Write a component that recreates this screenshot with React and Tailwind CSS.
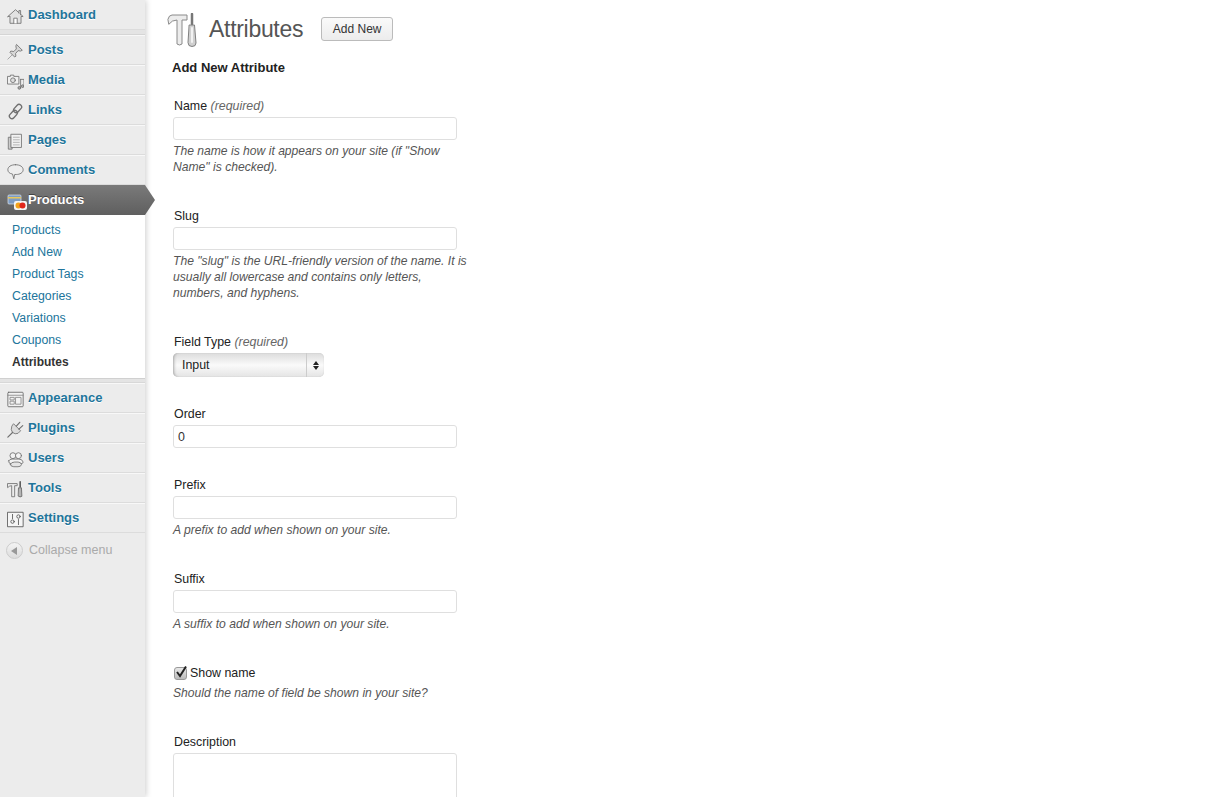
import { useState } from 'react'

const font = { fontFamily: '"Liberation Sans", Arial, sans-serif' }

function Icon({ children }) {
  return (
    <svg viewBox="0 0 20 20" className="mt-[3px] h-[17px] w-[17px]" fill="#e2e2e2" stroke="#707070" strokeWidth="1" strokeLinejoin="round" strokeLinecap="round">
      {children}
    </svg>
  )
}

const icons = {
  home: (
    <Icon>
      <path d="M1 10 L10 2 L19 10 L16.5 10 L16.5 18 L3.5 18 L3.5 10 Z" />
      <path d="M8 18 V12 H12 V18" fill="#fff" />
      <path d="M14 6 V3 H16 V8" />
    </Icon>
  ),
  pin: (
    <Icon>
      <path d="M11.5 2 L18 8.5 L16 9.5 L13 9 L10 12.5 L10.5 15.5 L9 16.5 L3.5 11 L4.5 9.5 L8 10 L11 7 L10.5 4 Z" fill="#d8d8d8" />
      <path d="M6 14 L1 19" fill="none" stroke="#999" />
    </Icon>
  ),
  media: (
    <Icon>
      <path d="M1 4 H4 V2.5 H8 V4 H14 V13 H1 Z" fill="#f0f0f0" />
      <circle cx="7" cy="8.5" r="2.8" fill="#ddd" />
      <path d="M16 7.5 H20 V15 M16 7.5 V17" fill="none" />
      <circle cx="14.5" cy="17.5" r="1.6" fill="#aaa" />
      <circle cx="18.5" cy="15.5" r="1.6" fill="#aaa" />
    </Icon>
  ),
  link: (
    <Icon>
      <rect x="9.5" y="1" width="6" height="11" rx="3" transform="rotate(42 12.5 6.5)" fill="none" strokeWidth="1.6" />
      <rect x="4.5" y="8" width="6" height="11" rx="3" transform="rotate(42 7.5 13.5)" fill="none" strokeWidth="1.6" />
    </Icon>
  ),
  pages: (
    <Icon>
      <path d="M2 5 H6 V19 H2 Z" fill="#ccc" />
      <path d="M5 1.5 H17 V17 H5 Z" fill="#f2f2f2" />
      <path d="M7.5 5 H14.5 M7.5 8 H14.5 M7.5 11 H14.5 M7.5 14 H14.5" fill="none" stroke="#aaa" />
    </Icon>
  ),
  comments: (
    <Icon>
      <path d="M10 2 C15.5 2 19 4.5 19 8 C19 11.5 15 13.5 11 13.5 L9 13.5 L8 18.5 L6.5 13 C3 12.5 1 10.5 1 8 C1 4.5 4.5 2 10 2 Z" fill="#eee" />
    </Icon>
  ),
  appearance: (
    <Icon>
      <rect x="1" y="1.5" width="18" height="17" rx="1" fill="#f3f3f3" stroke="#666" />
      <path d="M1 5 H19" stroke="#888" />
      <rect x="4" y="7.5" width="4.5" height="3" fill="none" stroke="#888" />
      <rect x="4" y="12" width="4.5" height="3.5" fill="none" stroke="#888" />
      <rect x="10.5" y="7.5" width="6" height="8" fill="none" stroke="#888" />
    </Icon>
  ),
  plugins: (
    <Icon>
      <path d="M8 3.5 L16 11.5 L13 14.5 Q9.5 16 6.5 13.5 Q4 10.5 5.5 6.5 Z" fill="#dcdcdc" />
      <path d="M11 6 L15 1.5 M14 9.5 L18.5 5.5 M6.5 13.5 L1 19" fill="none" strokeWidth="1.4" />
    </Icon>
  ),
  users: (
    <Icon>
      <circle cx="7" cy="5.5" r="3.5" fill="#f2f2f2" />
      <circle cx="13.5" cy="5.5" r="3.5" fill="#f2f2f2" />
      <path d="M2 11.5 Q3 9.5 6 9.5 L14 9.5 Q18 9.5 19 13 Q19 15 16 15 L5 15 Q1.5 15 2 11.5 Z" fill="#f2f2f2" />
      <path d="M4 15.5 Q5 13 9 13 L13 13 Q16.5 13 17 16 Q16.5 18.5 13 18.5 L8 18.5 Q4 18.5 4 15.5 Z" fill="#e4e4e4" />
    </Icon>
  ),
  tools: (
    <Icon>
      <path d="M1 3 H12 V5.5 H9 V18.5 H5.5 V5.5 Q3 5.5 1 7.5 Z" fill="#ececec" />
      <path d="M15.5 1 V7" fill="none" strokeWidth="1.8" stroke="#555" />
      <path d="M14 8 H17 L17.5 18 Q15.5 19.5 13.5 18 Z" fill="#b5b5b5" stroke="#666" />
    </Icon>
  ),
  settings: (
    <Icon>
      <rect x="1" y="1.5" width="18" height="17" fill="#f5f5f5" stroke="#555" />
      <path d="M6.5 4 V9 M13.5 10 V16" fill="none" stroke="#555" />
      <circle cx="6.5" cy="12.5" r="2" fill="none" stroke="#555" />
      <circle cx="13.5" cy="6.5" r="2" fill="none" stroke="#555" />
    </Icon>
  ),
  products: (
    <svg viewBox="0 0 20 20" className="mt-[4px] h-[20px] w-[20px]">
      <rect x="1" y="3" width="13" height="9" rx="1" fill="#7d9cc4" stroke="#dfe6ee" strokeWidth="0.7" />
      <rect x="1" y="5" width="13" height="1.5" fill="#e9c75a" />
      <rect x="7" y="9" width="13" height="9" rx="2" fill="#f4f4f4" />
      <circle cx="11.5" cy="13.5" r="3" fill="#f2a31b" />
      <circle cx="15.5" cy="13.5" r="3" fill="#e0261c" />
    </svg>
  ),
}

function MenuRow({ icon, label }) {
  return (
    <div className="flex h-[30px] items-center border-t border-t-[#f8f8f8] border-b border-b-[#dcdcdc]">
      <span className="ml-[7px] flex w-[21px] shrink-0">{icons[icon]}</span>
      <a className="text-[13px] font-bold text-[#21759b] [text-shadow:0_1px_0_#fff]">{label}</a>
    </div>
  )
}

const topMenu = [
  ['pin', 'Posts'],
  ['media', 'Media'],
  ['link', 'Links'],
  ['pages', 'Pages'],
  ['comments', 'Comments'],
]

const bottomMenu = [
  ['appearance', 'Appearance'],
  ['plugins', 'Plugins'],
  ['users', 'Users'],
  ['tools', 'Tools'],
  ['settings', 'Settings'],
]

const subMenu = ['Products', 'Add New', 'Product Tags', 'Categories', 'Variations', 'Coupons']

function Sidebar() {
  return (
    <aside className="relative z-10 w-[145px] shrink-0 bg-[#ececec] shadow-[1px_0_6px_rgba(0,0,0,0.2)]">
      <div className="flex h-[30px] items-center border-b border-b-[#dcdcdc]">
        <span className="ml-[7px] flex w-[21px] shrink-0">{icons.home}</span>
        <a className="text-[13px] font-bold text-[#21759b] [text-shadow:0_1px_0_#fff]">Dashboard</a>
      </div>
      <div className="h-[5px] border-b border-b-[#d5d5d5] bg-[#e4e4e4]" />
      {topMenu.map(([icon, label]) => (
        <MenuRow key={label} icon={icon} label={label} />
      ))}

      <div className="relative flex h-[30px] items-center bg-gradient-to-b from-[#7a7a7a] to-[#5f5f5f]">
        <span className="ml-[7px] flex w-[21px] shrink-0">{icons.products}</span>
        <a className="text-[13px] font-bold text-white [text-shadow:0_-1px_0_#444]">Products</a>
        <div className="absolute left-full top-0 h-[30px] w-[10px] bg-gradient-to-b from-[#7a7a7a] to-[#5f5f5f] [clip-path:polygon(0_0,100%_50%,0_100%)]" />
      </div>

      <div className="flex h-[163px] flex-col bg-white pt-[4px] text-[12.3px]">
        {subMenu.map((item) => (
          <a key={item} className="flex h-[22px] shrink-0 items-center pl-3 text-[#21759b]">{item}</a>
        ))}
        <a className="flex h-[22px] shrink-0 items-center pl-3 text-[12px] font-bold text-[#333]">Attributes</a>
      </div>
      <div className="h-[5px] border-t border-t-[#d0d0d0] border-b border-b-[#d8d8d8] bg-[#e4e4e4]" />

      {bottomMenu.map(([icon, label]) => (
        <MenuRow key={label} icon={icon} label={label} />
      ))}

      <div className="flex h-[35px] items-center pl-[6px] text-[12.5px] text-[#aaa]">
        <span className="mr-[6px] flex h-[17px] w-[17px] items-center justify-center rounded-full border border-[#ccc] bg-gradient-to-b from-[#f4f4f4] to-[#dcdcdc]">
          <span className="mr-[2px] h-0 w-0 border-y-[4px] border-r-[6px] border-y-transparent border-r-[#999]" />
        </span>
        Collapse menu
      </div>
    </aside>
  )
}

function Label({ children, hint, className = '' }) {
  return (
    <label className={`block h-4 text-[12.4px] leading-4 text-[#222] ${className}`}>
      {children}
      {hint && <em className="text-[#666]"> {hint}</em>}
    </label>
  )
}

function Help({ children, className = '' }) {
  return <p className={`-ml-px w-[296px] text-[12.14px] italic leading-4 text-[#555] ${className}`}>{children}</p>
}

function TextInput({ defaultValue }) {
  return (
    <input
      defaultValue={defaultValue}
      className="-ml-px mt-[3px] block h-[23px] w-[284px] rounded-[3px] border border-[#dfdfdf] bg-white px-1 text-[12.4px] text-[#333] outline-none"
    />
  )
}

function App() {
  const [showName, setShowName] = useState(true)

  return (
    <div className="flex h-[797px] overflow-hidden bg-white" style={font}>
      <Sidebar />
      <main className="min-w-0 flex-1 pl-[22px] pt-[13px] text-[#333]">
        <div className="flex items-start">
          <svg viewBox="0 0 32 34" className="h-[34px] w-[32px] shrink-0" strokeLinejoin="round" strokeLinecap="round">
            <path d="M1 6 Q2 2 5 2 H20 V7 H15 V31 Q12.5 33 10 31 V7 Q5 7 2 11 Z" fill="#ececec" stroke="#8a8a8a" />
            <path d="M25 1 V11" stroke="#777" strokeWidth="2.5" fill="none" />
            <path d="M22.5 12 H27.5 L29 30 Q29 33.5 25 33.5 Q21 33.5 21 30 Z" fill="#d0d0d0" stroke="#808080" />
            <path d="M25 15 V29" stroke="#f2f2f2" strokeWidth="2" fill="none" />
          </svg>
          <h1 className="ml-[10px] mt-[1px] text-[23px] font-normal leading-[30px] tracking-[-0.3px] text-[#555]">Attributes</h1>
          <button className="ml-[18px] mt-[4px] h-6 w-[72px] rounded-[3px] border border-[#bbb] bg-gradient-to-b from-[#fafafa] to-[#ececec] text-[12px] text-[#333]">
            Add New
          </button>
        </div>

        <form className="pl-[7px]">
          <h3 className="-ml-[2px] mt-[13px] h-4 text-[13px] font-bold leading-4 text-[#222]">Add New Attribute</h3>

          <Label className="mt-[22px]" hint="(required)">Name</Label>
          <TextInput />
          <Help className="mt-[3px]">The name is how it appears on your site (if "Show Name" is checked).</Help>

          <Label className="mt-[33px]">Slug</Label>
          <TextInput />
          <Help className="mt-[3px]">The "slug" is the URL-friendly version of the name. It is usually all lowercase and contains only letters, numbers, and hyphens.</Help>

          <Label className="mt-[33px]" hint="(required)">Field Type</Label>
          <div className="relative -ml-px mt-[3px] h-6 w-[151px]">
            <select className="block h-6 w-full appearance-none rounded-[5px] bg-gradient-to-b from-[#dcdcdc] via-[#fafafa] to-[#e4e4e4] pl-[9px] text-[12.4px] text-[#222] shadow-[inset_3px_0_3px_-2px_#aaa,inset_0_0_1px_#bbb] outline-none">
              <option>Input</option>
            </select>
            <span className="pointer-events-none absolute right-0 top-0 flex h-6 w-[18px] flex-col items-center justify-center gap-px border-l border-l-[#ccc]">
              <span className="h-0 w-0 border-x-[3px] border-b-[4px] border-x-transparent border-b-[#222]" />
              <span className="h-0 w-0 border-x-[3px] border-t-[4px] border-x-transparent border-t-[#222]" />
            </span>
          </div>

          <Label className="mt-[29px]">Order</Label>
          <TextInput defaultValue="0" />

          <Label className="mt-[29px]">Prefix</Label>
          <TextInput />
          <Help className="mt-[3px]">A prefix to add when shown on your site.</Help>

          <Label className="mt-[33px]">Suffix</Label>
          <TextInput />
          <Help className="mt-[3px]">A suffix to add when shown on your site.</Help>

          <label className="relative mt-[33px] flex h-4 items-center text-[12.4px] text-[#222]">
            <input
              type="checkbox"
              checked={showName}
              onChange={(event) => setShowName(event.target.checked)}
              className="mr-[3px] h-[13px] w-[13px] appearance-none rounded-[3px] border border-[#999] bg-gradient-to-b from-[#e8e8e8] to-[#bbb]"
            />
            {showName && (
              <svg viewBox="0 0 14 14" className="pointer-events-none absolute left-0 top-0 h-[14px] w-[14px]">
                <path d="M3 7 L6 11 L12 1.5" fill="none" stroke="#222" strokeWidth="2" />
              </svg>
            )}
            Show name
          </label>
          <Help className="mt-1">Should the name of field be shown in your site?</Help>

          <Label className="mt-[33px]">Description</Label>
          <textarea className="-ml-px mt-[3px] block h-[80px] w-[284px] resize-none rounded-[3px] border border-[#dfdfdf] bg-white outline-none" />
        </form>
      </main>
    </div>
  )
}

export default App
